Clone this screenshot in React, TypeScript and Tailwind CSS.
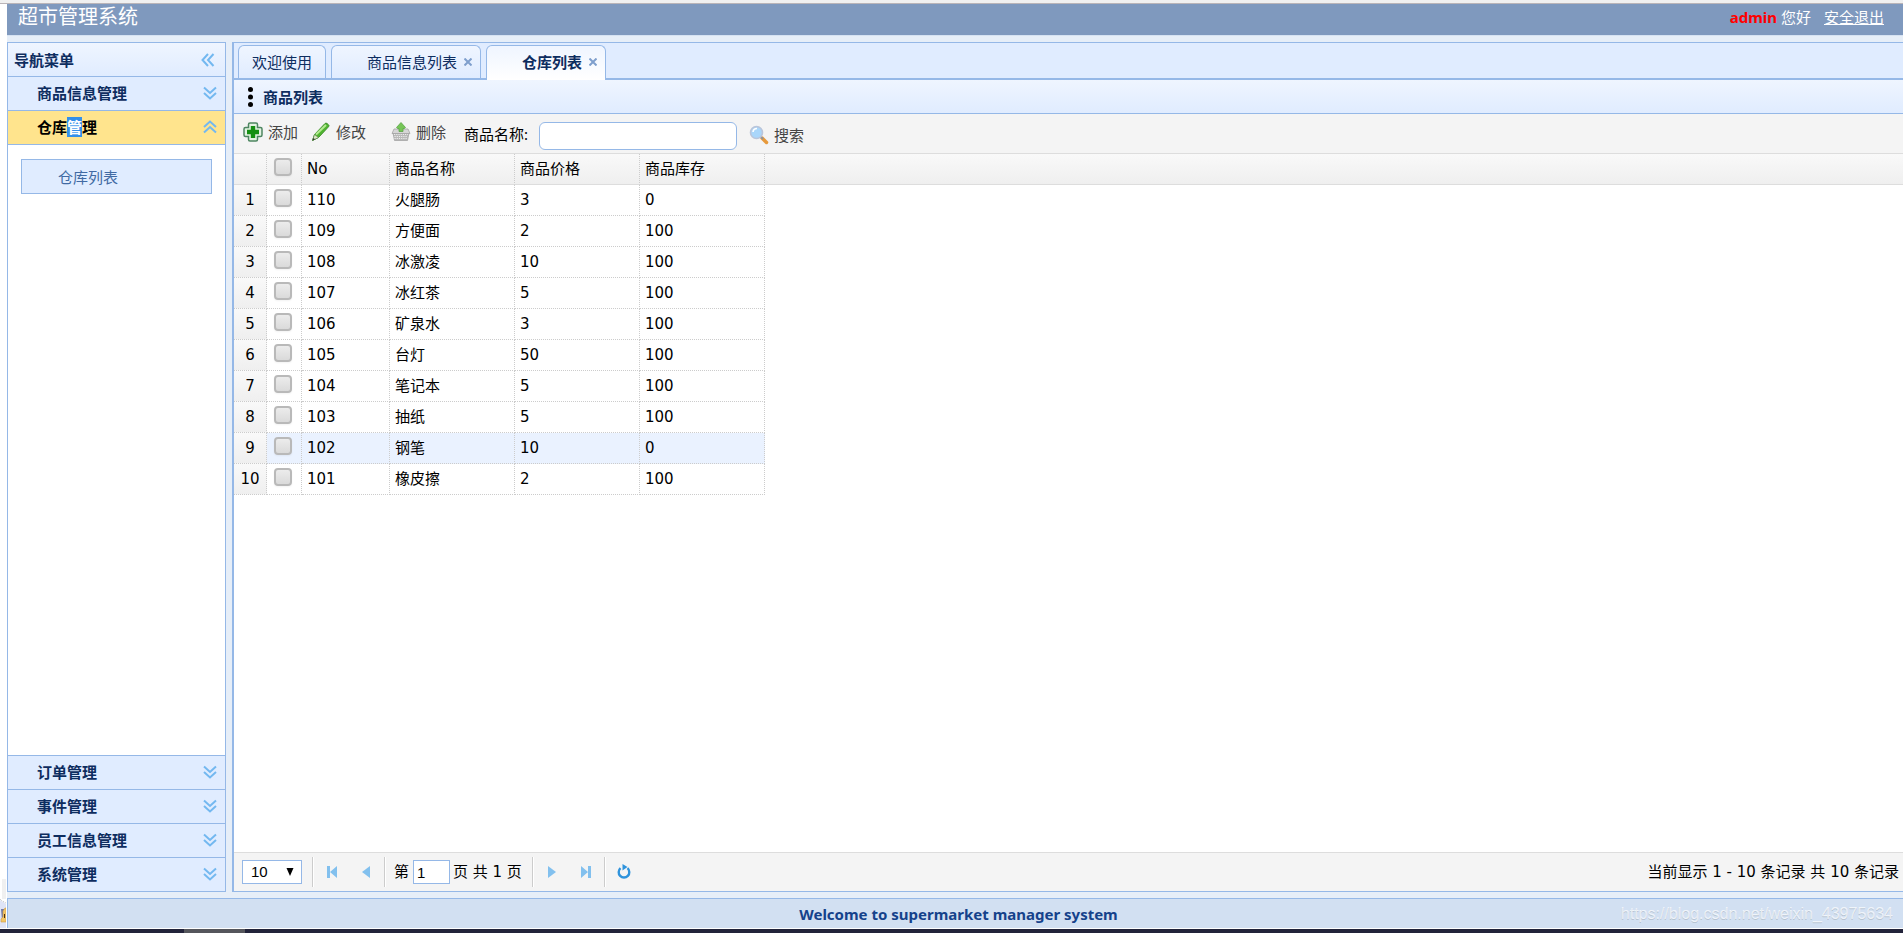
import { useState } from "react";
import { clsx } from "clsx";

interface Product {
    no: number;
    name: string;
    price: number;
    stock: number;
}

const products: Product[] = [
    { no: 110, name: "火腿肠", price: 3, stock: 0 },
    { no: 109, name: "方便面", price: 2, stock: 100 },
    { no: 108, name: "冰激凌", price: 10, stock: 100 },
    { no: 107, name: "冰红茶", price: 5, stock: 100 },
    { no: 106, name: "矿泉水", price: 3, stock: 100 },
    { no: 105, name: "台灯", price: 50, stock: 100 },
    { no: 104, name: "笔记本", price: 5, stock: 100 },
    { no: 103, name: "抽纸", price: 5, stock: 100 },
    { no: 102, name: "钢笔", price: 10, stock: 0 },
    { no: 101, name: "橡皮擦", price: 2, stock: 100 },
];

function DoubleChevron({ className }: { className?: string }) {
    return (
        <svg
            className={clsx("size-4", className)}
            viewBox="0 0 16 16"
            fill="none"
            stroke="#73b8f0"
            strokeWidth="2"
        >
            <path d="M2 2.5l6 5.5 6-5.5M2 8l6 5.5L14 8" />
        </svg>
    );
}

function AddIcon() {
    return (
        <svg className="size-5" viewBox="0 0 20 20">
            <path
                d="M7 1h6q1.500 0 1.500 1.500v3h3q1.500 0 1.500 1.500v6q0 1.500-1.500 1.500h-3v3q0 1.500-1.500 1.500H7q-1.500 0-1.500-1.500v-3h-3Q1 14.500 1 13V7q0-1.500 1.500-1.500h3v-3Q5.500 1 7 1z"
                fill="#e3f3e2"
                stroke="#4d8560"
                strokeWidth="1.500"
            />
            <path d="M7.800 4h4.400v3.800H16v4.400h-3.800V16H7.800v-3.800H4V7.800h3.800z" fill="#148f12" />
        </svg>
    );
}

function PencilIcon() {
    return (
        <svg className="size-5" viewBox="0 0 20 20">
            <path d="M1.500 18.500l2-6L14 1.500q1-.8 2 0l1.500 1.300q1 .9 0 2L7.500 15.500z" fill="#4fb52f" stroke="#3f8f2c" />
            <path d="M5 12.500L15 3" stroke="#b4ea92" strokeWidth="2" />
            <path d="M1.500 18.500l2-6 4 3z" fill="#dfe6c6" stroke="#5f8a50" strokeWidth=".7" />
            <path d="M1.500 18.500l.8-2.600 1.800 1.300z" fill="#333" />
        </svg>
    );
}

function BasketIcon() {
    return (
        <svg className="size-5" viewBox="0 0 20 20">
            <path d="M2 11h16l-1.500 7.500h-13z" fill="#b9b9b9" stroke="#a5a5a5" strokeWidth=".8" />
            <path
                d="M3 12.500h14M3.500 14.500h13M3.500 16.500h13"
                stroke="#ececec"
                strokeWidth="1.200"
                strokeDasharray="1.200 1"
            />
            <path d="M3 7h14l2 4.500H1z" fill="#d6d6d6" stroke="#a2a2a2" strokeWidth=".8" />
            <path d="M10 .5l4.500 5q-1 1.500-2.500 1v3H8v-3q-1.500.5-2.500-1z" fill="#76c557" stroke="#5ba548" strokeWidth=".8" />
        </svg>
    );
}

function SearchIcon() {
    return (
        <svg className="size-5" viewBox="0 0 20 20">
            <path d="M13 13l4.500 4.500" stroke="#e79a3c" strokeWidth="3.500" strokeLinecap="round" />
            <path d="M11.500 11.500l2.500 2.500" stroke="#8d939c" strokeWidth="2" />
            <circle cx="7.500" cy="7.500" r="6" fill="#a9d6fa" stroke="#bac5da" strokeWidth="1.600" />
            <path d="M4 7a4 4 0 014-3.500" fill="none" stroke="#fff" strokeWidth="1.600" />
        </svg>
    );
}

function PageIcon({ type }: { type: "first" | "prev" | "next" | "last" }) {
    return (
        <svg className="size-4" viewBox="0 0 16 16" fill="#82c0ee">
            {type === "first" && <path d="M3 2h3v12H3zM13 2v12L6 8z" />}
            {type === "prev" && <path d="M12 2v12L4 8z" />}
            {type === "next" && <path d="M4 2v12l8-6z" />}
            {type === "last" && <path d="M3 2v12l7-6zM10 2h3v12h-3z" />}
        </svg>
    );
}

function RefreshIcon() {
    return (
        <svg className="size-4" viewBox="0 0 16 16">
            <path
                d="M4.500 4.200a5.300 5.300 0 107 0"
                fill="none"
                stroke="#2f93dc"
                strokeWidth="2.400"
            />
            <path d="M6.500 0l5 3-5 3.500z" fill="#2f93dc" />
        </svg>
    );
}

function NavItem({ title }: { title: string }) {
    return (
        <button
            type="button"
            className="flex h-[34px] w-full shrink-0 items-center justify-between border-t border-[#95b8e7] bg-[#e0ecff] pr-[7px] pb-px pl-[29px] font-bold text-[#0e2d5f]"
        >
            {title}
            <DoubleChevron />
        </button>
    );
}

function Sidebar() {
    return (
        <aside className="flex w-[219px] shrink-0 flex-col border border-[#95b8e7] bg-white">
            <div className="flex h-[33px] shrink-0 items-center justify-between bg-linear-to-b from-[#eff5ff] to-[#e0ecff] pr-[9px] pl-1.5 font-bold text-[#0e2d5f]">
                导航菜单
                <button type="button" aria-label="收起">
                    <DoubleChevron className="rotate-90" />
                </button>
            </div>
            <NavItem title="商品信息管理" />
            <button
                type="button"
                className="flex h-[34px] w-full shrink-0 items-center justify-between border-t border-[#95b8e7] bg-[#ffe48d] pr-[7px] pb-px pl-[29px] font-bold text-black"
            >
                <span>
                    仓库<span className="bg-[#3390ea] text-white">管</span>理
                </span>
                <DoubleChevron className="rotate-180" />
            </button>
            <div className="flex-1 border-t border-[#95b8e7] px-[13px] py-[14px]">
                <a
                    href="#"
                    className="flex h-[35px] items-center border border-[#95b8e7] bg-[#e0ecff] pl-9 text-[#416aa3]"
                >
                    仓库列表
                </a>
            </div>
            <NavItem title="订单管理" />
            <NavItem title="事件管理" />
            <NavItem title="员工信息管理" />
            <NavItem title="系统管理" />
        </aside>
    );
}

function CloseButton() {
    return (
        <button type="button" aria-label="关闭">
            <svg className="size-2" viewBox="0 0 8 8" stroke="#7f9fcd" strokeWidth="2">
                <path d="M.5.5l7 7M7.500.5l-7 7" />
            </svg>
        </button>
    );
}

function Tabs() {
    return (
        <div className="flex h-[37px] shrink-0 items-end gap-[5px] border-b-2 border-[#95b8e7] bg-[#e0ecff] pl-1">
            <button
                type="button"
                className="h-[33px] rounded-t-md border border-b-0 border-[#95b8e7] bg-linear-to-b from-[#eff5ff] to-[#e0ecff] px-[13px] text-[#0e2d5f]"
            >
                欢迎使用
            </button>
            <div className="flex h-[33px] items-center gap-[7px] rounded-t-md border border-b-0 border-[#95b8e7] bg-linear-to-b from-[#eff5ff] to-[#e0ecff] pr-2 pl-[35px] text-[#0e2d5f]">
                <button type="button">商品信息列表</button>
                <CloseButton />
            </div>
            <div className="-mb-0.5 flex h-[35px] items-center gap-[7px] rounded-t-md border border-b-0 border-[#95b8e7] bg-linear-to-b from-[#eff5ff] to-white pr-2 pb-0.5 pl-[35px] font-bold text-[#0e2d5f]">
                <button type="button">仓库列表</button>
                <CloseButton />
            </div>
        </div>
    );
}

function Toolbar() {
    return (
        <div className="flex h-10 shrink-0 items-center border-b border-[#ddd] bg-[#f4f4f4] pl-[9px] text-[#444]">
            <div className="flex items-center pb-1">
                <button type="button" className="flex items-center gap-[5px]">
                    <AddIcon />
                    添加
                </button>
                <button type="button" className="ml-[13px] flex items-center gap-[5px]">
                    <PencilIcon />
                    修改
                </button>
                <button type="button" className="ml-[25px] flex items-center gap-[5px]">
                    <BasketIcon />
                    删除
                </button>
            </div>
            <label htmlFor="name" className="ml-[18px] text-black">
                商品名称:
            </label>
            <input
                id="name"
                type="text"
                className="mt-1 ml-[11px] h-7 w-[198px] rounded-md border border-[#95b8e7] bg-white px-1 outline-none"
            />
            <button type="button" className="ml-3 flex items-center gap-[5px] pt-0.5">
                <SearchIcon />
                搜索
            </button>
        </div>
    );
}

function Checkbox({ label }: { label: string }) {
    return (
        <input
            type="checkbox"
            aria-label={label}
            className="mb-1 ml-[7px] block size-[18px] appearance-none rounded-sm border-2 border-[#b9b9b9] bg-linear-to-b from-[#ececec] to-[#dadada] shadow-xs checked:bg-[#95b8e7]"
        />
    );
}

const headCell = "border-r border-b border-dotted border-r-[#ccc] border-b-transparent";
const cell = "border-r border-b border-dotted border-[#ccc]";

function ProductTable() {
    return (
        <div className="flex-1 overflow-auto bg-white">
            <div className="bg-linear-to-b from-[#f9f9f9] from-0% to-[#efefef] to-100% bg-[length:100%_30px] bg-no-repeat">
                <div className="bg-[linear-gradient(#ddd,#ddd)] bg-[length:100%_1px] bg-[position:0_30px] bg-no-repeat">
                    <table className="w-[531px] table-fixed border-separate border-spacing-0 font-['DejaVu_Sans','Noto_Sans_CJK_SC',sans-serif] text-black">
                        <colgroup>
                            <col className="w-[33px]" />
                            <col className="w-[35px]" />
                            <col className="w-[88px]" />
                            <col className="w-[125px]" />
                            <col className="w-[125px]" />
                            <col className="w-[125px]" />
                        </colgroup>
                        <thead>
                            <tr className="h-[31px]">
                                <th className={headCell} />
                                <th className={clsx(headCell, "p-0")}>
                                    <Checkbox label="全选" />
                                </th>
                                {["No", "商品名称", "商品价格", "商品库存"].map((title) => (
                                    <th
                                        key={title}
                                        className={clsx(headCell, "px-[5px] text-left font-normal")}
                                    >
                                        {title}
                                    </th>
                                ))}
                            </tr>
                        </thead>
                        <tbody>
                            {products.map((product, i) => (
                                <tr
                                    key={product.no}
                                    className={clsx("h-[31px]", product.no === 102 ? "bg-[#eaf2ff]" : "bg-white")}
                                >
                                    <td
                                        className={clsx(
                                            cell,
                                            "bg-linear-to-b from-[#f9f9f9] to-[#efefef] p-0 text-center"
                                        )}
                                    >
                                        {i + 1}
                                    </td>
                                    <td className={clsx(cell, "p-0")}>
                                        <Checkbox label={product.name} />
                                    </td>
                                    <td className={clsx(cell, "px-[5px]")}>{product.no}</td>
                                    <td className={clsx(cell, "px-[5px]")}>{product.name}</td>
                                    <td className={clsx(cell, "px-[5px]")}>{product.price}</td>
                                    <td className={clsx(cell, "px-[5px]")}>{product.stock}</td>
                                </tr>
                            ))}
                        </tbody>
                    </table>
                </div>
            </div>
        </div>
    );
}

function Separator() {
    return <div className="h-[30px] w-0.5 border-l border-[#ccc] bg-white" />;
}

function Pager() {
    const [page, setPage] = useState("1");

    return (
        <div className="flex h-[39px] shrink-0 items-center border-t border-[#ddd] bg-[#f4f4f4] pr-1 pl-2 font-['DejaVu_Sans','Noto_Sans_CJK_SC',sans-serif] text-black">
            <div className="relative">
                <select
                    aria-label="每页记录数"
                    className="h-6 w-[60px] appearance-none border border-[#95b8e7] bg-white pl-2 font-['Liberation_Sans',sans-serif] outline-none"
                >
                    <option>10</option>
                    <option>20</option>
                </select>
                <svg
                    className="pointer-events-none absolute top-2 right-2 size-2"
                    viewBox="0 0 8 8"
                >
                    <path d="M.5 0h7L4 8z" />
                </svg>
            </div>
            <div className="flex items-center pl-2.5">
                <Separator />
                <button type="button" aria-label="首页" className="mx-2.5">
                    <PageIcon type="first" />
                </button>
                <button type="button" aria-label="上一页" className="mx-2">
                    <PageIcon type="prev" />
                </button>
                <div className="pl-0.5">
                    <Separator />
                </div>
            </div>
            <label className="ml-2 flex items-center gap-1">
                第
                <input
                    type="text"
                    value={page}
                    onChange={(e) => setPage(e.target.value)}
                    className="h-6 w-[37px] border border-[#95b8e7] bg-white px-[3px] font-['Liberation_Sans',sans-serif] outline-none"
                />
            </label>
            <span className="mr-2.5 ml-[3px]">页 共 1 页</span>
            <Separator />
            <button type="button" aria-label="下一页" className="mx-2.5">
                <PageIcon type="next" />
            </button>
            <button type="button" aria-label="末页" className="mx-2">
                <PageIcon type="last" />
            </button>
            <div className="pl-0.5">
                <Separator />
            </div>
            <button type="button" aria-label="刷新" className="ml-2.5">
                <RefreshIcon />
            </button>
            <span className="ml-auto">当前显示 1 - 10 条记录 共 10 条记录</span>
        </div>
    );
}

// slice of the desktop that shows left of the window
function DesktopEdge() {
    return (
        <div className="flex w-[7px] shrink-0 flex-col justify-end bg-white pr-px">
            <div className="ml-0.5 h-5 bg-[#f0f0f0]" />
            <svg className="h-[29px] w-1.5" viewBox="0 0 6 29">
                <path d="M0 1l6 4v24H0z" fill="#dfe4f6" />
                <path d="M0 0l2 2 4 2" stroke="#bbb" fill="none" strokeDasharray="1 1" />
                <path d="M1 10h4v3H3v8H2z" fill="#7079a5" />
                <path d="M3 12l2-3h1v14H1v-3l2-2z" fill="#f3c766" stroke="#cf9a4b" strokeWidth=".6" />
                <path d="M4 15h1v4H4z" fill="#4b2f10" />
            </svg>
        </div>
    );
}

export default function App() {
    return (
        <div className="flex h-screen flex-col bg-white font-['Noto_Sans','Noto_Sans_CJK_SC',sans-serif] text-[15px] leading-5">
            <div className="h-1 shrink-0 border-b border-[#b9b4b8] bg-[#f0f0f0]" />
            <div className="flex min-h-0 flex-1">
                <DesktopEdge />
                <div className="flex min-w-0 flex-1 flex-col bg-[#e6eef8]">
                    <header className="flex h-8 shrink-0 justify-between border-b border-[#d5e2f2] bg-[#7f99be] pr-[19px] pl-[11px] text-white">
                        <h1 className="text-xl leading-[26px]">超市管理系统</h1>
                        <div className="flex gap-[13px] pt-[3px]">
                            <span>
                                <b className="text-[red]">admin</b> 您好
                            </span>
                            <a href="#" className="underline">
                                安全退出
                            </a>
                        </div>
                    </header>
                    <div className="flex min-h-0 flex-1 gap-1.5 py-1.5">
                        <Sidebar />
                        <main className="flex min-w-0 flex-1 flex-col border border-r-0 border-l-2 border-[#95b8e7]">
                            <Tabs />
                            <div className="flex h-[34px] shrink-0 items-center gap-2.5 border-b border-[#95b8e7] bg-linear-to-b from-[#eff5ff] to-[#e0ecff] pl-[14px] font-bold text-[#0e2d5f]">
                                <svg className="h-5 w-[5px]" viewBox="0 0 5 20">
                                    <circle cx="2.500" cy="2.500" r="2.500" />
                                    <circle cx="2.500" cy="10" r="2.500" />
                                    <circle cx="2.500" cy="17.500" r="2.500" />
                                </svg>
                                商品列表
                            </div>
                            <Toolbar />
                            <ProductTable />
                            <Pager />
                        </main>
                    </div>
                    <footer className="relative flex h-[30px] shrink-0 items-center justify-center border-t border-l border-[#95b8e7] bg-[#d2e0f2] pl-1.5 font-bold text-[#15428b]">
                        Welcome to supermarket manager system
                        <span className="absolute right-2.5 font-['Liberation_Sans',sans-serif] text-base font-normal text-white/70 text-shadow-2xs">
                            https://blog.csdn.net/weixin_43975634
                        </span>
                    </footer>
                </div>
            </div>
            <div className="h-[5px] shrink-0 border-t border-white bg-[#22233a] pl-[184px]">
                <div className="h-1 w-[61px] bg-[#55565c]" />
            </div>
        </div>
    );
}
